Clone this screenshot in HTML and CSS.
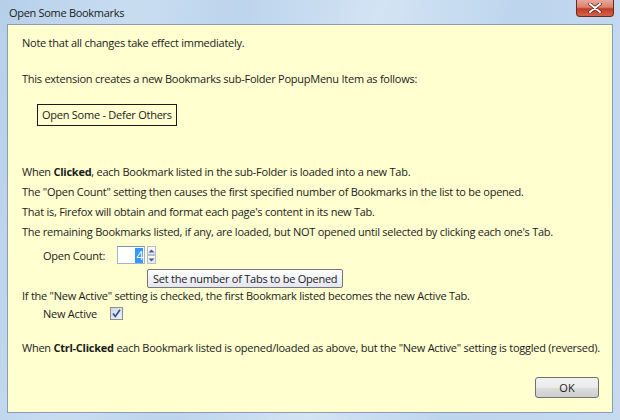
FILE: index.html
```html
<!DOCTYPE html>
<html lang="en">
<head>
  <meta charset="UTF-8">
  <title>Open Some Bookmarks</title>
  <link rel="stylesheet" href="styles.css">
</head>
<body>

  <div class="window">
    <div class="titlebar">
      <span class="title">Open Some Bookmarks</span>
      <div class="close">
        <svg width="14" height="10" viewBox="0 0 14 10">
          <path d="M2 1 L12 9 M12 1 L2 9" stroke="#5a1a12" stroke-width="3.4" stroke-linecap="round"/>
          <path d="M2 1 L12 9 M12 1 L2 9" stroke="#ffffff" stroke-width="2" stroke-linecap="round"/>
        </svg>
      </div>
    </div>

    <div class="client">
      <p class="line">Note that all changes take effect immediately.</p>
      <p class="line gap-16">This extension creates a new Bookmarks sub-Folder PopupMenu Item as follows:</p>
      <div class="menu-item">Open Some - Defer Others</div>

      <div class="para">
        <p class="line">When <b>Clicked</b>, each Bookmark listed in the sub-Folder is loaded into a new Tab.</p>
        <p class="line">The "Open Count" setting then causes the first specified number of Bookmarks in the list to be opened.</p>
        <p class="line">That is, Firefox will obtain and format each page's content in its new Tab.</p>
        <p class="line">The remaining Bookmarks listed, if any, are loaded, but NOT opened until selected by clicking each one's Tab.</p>
      </div>

      <div class="field count-row">
        <span class="count-label">Open Count:</span>
        <span class="number-box"><span class="sel">4</span></span>
        <span class="spinner">
          <span class="spin up"><svg width="7" height="4" viewBox="0 0 7 4"><path d="M0.5 3.5 L3.5 0.5 L6.5 3.5 Z" fill="#4d6185"/></svg></span>
          <span class="spin down"><svg width="7" height="4" viewBox="0 0 7 4"><path d="M0.5 0.5 L3.5 3.5 L6.5 0.5 Z" fill="#4d6185"/></svg></span>
        </span>
      </div>

      <div class="tooltip">Set the number of Tabs to be Opened</div>

      <p class="line if-line">If the "New Active" setting is checked, the first Bookmark listed becomes the new Active Tab.</p>

      <div class="field active-row">
        <span class="active-label">New Active</span>
        <span class="checkbox">
          <svg width="9" height="9" viewBox="0 0 9 9"><path d="M1 4.5 L3.3 7.5 L8 0.8" fill="none" stroke="#2a4f8f" stroke-width="1.6"/></svg>
        </span>
      </div>

      <p class="line ctrl-line">When <b>Ctrl-Clicked</b> each Bookmark listed is opened/loaded as above, but the "New Active" setting is toggled (reversed).</p>

      <div class="actions">
        <button class="ok">OK</button>
      </div>
    </div>
  </div>

</body>
</html>
```

FILE: styles.css
```css
body {
  margin: 0;
  padding: 0;
  width: 620px;
  height: 420px;
  overflow: hidden;
  font-family: "Open Sans", "Noto Sans", sans-serif;
  font-size: 11px;
  letter-spacing: -0.25px;
  color: #1b1b1b;
}

.window {
  height: 420px;
  box-sizing: border-box;
  padding: 0 7px 7px 7px;
  display: flex;
  flex-direction: column;
  background: linear-gradient(100deg, #b6d0ea 0%, #c9ddf1 20%, #bcd4ec 35%, #d3e4f4 55%, #bdd5ed 75%, #c6dbf0 100%);
}

.titlebar {
  height: 24px;
  display: flex;
  align-items: flex-start;
  position: relative;
}

.title {
  margin: 4px 0 0 2px;
  font-size: 11px;
  letter-spacing: -0.3px;
  color: #1a1a1a;
  line-height: 18px;
}

.close {
  position: absolute;
  right: -1px;
  top: 0;
  width: 38px;
  height: 17px;
  box-sizing: border-box;
  border: 1px solid #6d2a20;
  border-top: none;
  border-radius: 0 0 4px 4px;
  background: linear-gradient(#e9a899 0%, #d98270 45%, #c23c24 55%, #d3634a 100%);
  display: flex;
  align-items: center;
  justify-content: center;
}

.client {
  flex: 1;
  position: relative;
  background: #ffffd0;
  border: 1px solid #8c9db3;
  padding: 8px 14px 0 14px;
}

.line {
  margin: 0;
  line-height: 20px;
  white-space: nowrap;
}

.gap-16 {
  margin-top: 16px;
}

.menu-item {
  display: inline-block;
  margin: 15px 0 0 15px;
  height: 22px;
  box-sizing: border-box;
  padding: 0 4px;
  line-height: 20px;
  border: 1px solid #1b1b1b;
}

.para {
  margin-top: 36px;
}

.field {
  display: flex;
  align-items: center;
  padding-left: 21px;
}

.count-row {
  margin-top: 4px;
  height: 18px;
}

.count-label {
  width: 74px;
}

.number-box {
  width: 28px;
  height: 18px;
  box-sizing: border-box;
  border: 1px solid #a3b3cc;
  border-top-color: #7d94b8;
  background: #fff;
  display: flex;
  justify-content: flex-end;
  align-items: center;
  padding: 1px 1px 1px 0;
}

.sel {
  background: #3399ff;
  color: #fff;
  height: 15px;
  line-height: 15px;
  padding: 0 0 0 1px;
  font-size: 12px;
}

.spinner {
  margin-left: 2px;
  display: flex;
  flex-direction: column;
  height: 18px;
}

.spin {
  width: 9px;
  height: 9px;
  box-sizing: border-box;
  border: 1px solid #b5bfcf;
  background: linear-gradient(#fafbfd, #e3e8f1);
  display: flex;
  align-items: center;
  justify-content: center;
}

.tooltip {
  position: absolute;
  left: 139px;
  top: 244px;
  height: 19px;
  box-sizing: border-box;
  padding: 0 5px;
  line-height: 17px;
  border: 1px solid #767676;
  border-radius: 2px;
  background: linear-gradient(#ffffff, #e4e5f0);
  white-space: nowrap;
}

.if-line {
  margin-top: 22px;
}

.active-row {
  height: 14px;
}

.active-label {
  width: 67px;
}

.checkbox {
  width: 13px;
  height: 13px;
  box-sizing: border-box;
  border: 1px solid #8f8f8f;
  background: linear-gradient(135deg, #cfd8e4, #eef2f7);
  display: flex;
  align-items: center;
  justify-content: center;
}

.ctrl-line {
  margin-top: 18px;
}

.actions {
  display: flex;
  justify-content: flex-end;
  margin-top: 19px;
}

.ok {
  width: 64px;
  height: 21px;
  margin-right: -1px;
  border: 1px solid #707070;
  border-radius: 3px;
  background: linear-gradient(#f2f2f2 0%, #ebebeb 50%, #dddddd 51%, #cfcfcf 100%);
  font-family: "Open Sans", "Noto Sans", sans-serif;
  font-size: 11px;
  color: #1b1b1b;
  padding: 0;
}
```
